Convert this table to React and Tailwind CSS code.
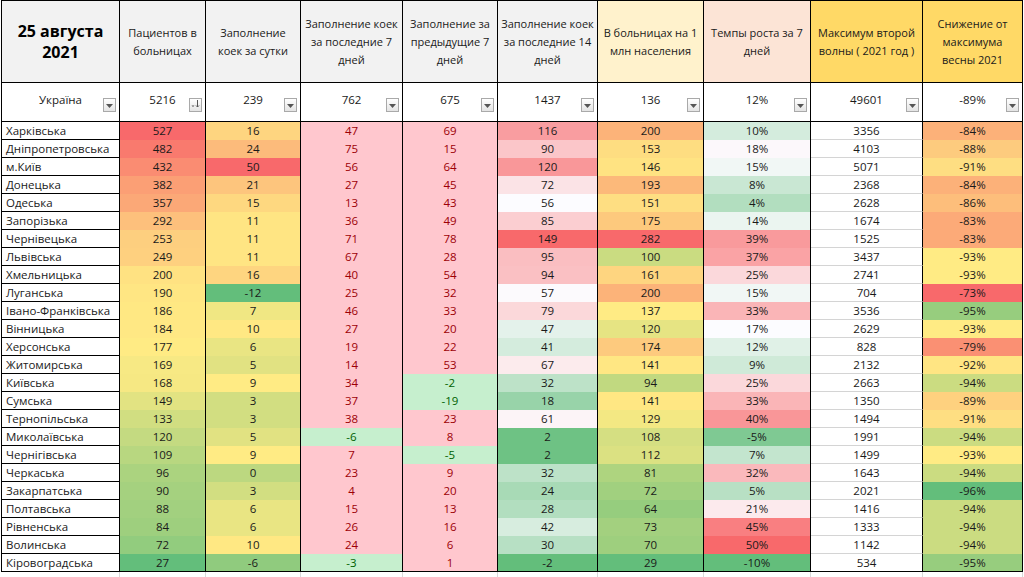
import React from 'react';

const rows = [
  ['Харківська', 527, 16, 47, 69, 116, 200, 10, 3356, -84],
  ['Дніпропетровська', 482, 24, 75, 15, 90, 153, 18, 4103, -88],
  ['м.Київ', 432, 50, 56, 64, 120, 146, 15, 5071, -91],
  ['Донецька', 382, 21, 27, 45, 72, 193, 8, 2368, -84],
  ['Одеська', 357, 15, 13, 43, 56, 151, 4, 2628, -86],
  ['Запорізька', 292, 11, 36, 49, 85, 175, 14, 1674, -83],
  ['Чернівецька', 253, 11, 71, 78, 149, 282, 39, 1525, -83],
  ['Львівська', 249, 11, 67, 28, 95, 100, 37, 3437, -93],
  ['Хмельницька', 200, 16, 40, 54, 94, 161, 25, 2741, -93],
  ['Луганська', 190, -12, 25, 32, 57, 200, 15, 704, -73],
  ['Івано-Франківська', 186, 7, 46, 33, 79, 137, 33, 3536, -95],
  ['Вінницька', 184, 10, 27, 20, 47, 120, 17, 2629, -93],
  ['Херсонська', 177, 6, 19, 22, 41, 174, 12, 828, -79],
  ['Житомирська', 169, 5, 14, 53, 67, 141, 9, 2132, -92],
  ['Київська', 168, 9, 34, -2, 32, 94, 25, 2663, -94],
  ['Сумська', 149, 3, 37, -19, 18, 141, 33, 1350, -89],
  ['Тернопільська', 133, 3, 38, 23, 61, 129, 40, 1494, -91],
  ['Миколаївська', 120, 5, -6, 8, 2, 108, -5, 1991, -94],
  ['Чернігівська', 109, 9, 7, -5, 2, 112, 7, 1499, -93],
  ['Черкаська', 96, 0, 23, 9, 32, 81, 32, 1643, -94],
  ['Закарпатська', 90, 3, 4, 20, 24, 72, 5, 2021, -96],
  ['Полтавська', 88, 6, 15, 13, 28, 64, 21, 1416, -94],
  ['Рівненська', 84, 6, 26, 16, 42, 73, 45, 1333, -94],
  ['Волинська', 72, 10, 24, 6, 30, 70, 50, 1142, -94],
  ['Кіровоградська', 27, -6, -3, 1, -2, 29, -10, 534, -95],
];

const GREEN = [99, 190, 123];
const YELLOW = [255, 235, 132];
const RED = [248, 105, 107];
const WHITE = [252, 252, 255];

const mix = (a, b, t) => a.map((c, i) => Math.round(c + (b[i] - c) * t));

// excel style 3-colour scale: min / 50th percentile / max
const makeScale = (col, midColor) => {
  const vals = rows.map((r) => r[col]).sort((a, b) => a - b);
  const min = vals[0];
  const max = vals[vals.length - 1];
  const mid = vals[Math.floor(vals.length / 2)];
  return (v) => {
    let c;
    if (v <= mid) c = mix(GREEN, midColor, mid === min ? 1 : (v - min) / (mid - min));
    else c = mix(midColor, RED, (v - mid) / (max - mid));
    return `rgb(${c[0]},${c[1]},${c[2]})`;
  };
};

const scales = {
  1: makeScale(1, YELLOW),
  2: makeScale(2, YELLOW),
  5: makeScale(5, WHITE),
  6: makeScale(6, YELLOW),
  7: makeScale(7, WHITE),
  9: makeScale(9, YELLOW),
};

const headers = [
  ['Пациентов в', 'больницах'],
  ['Заполнение', 'коек за сутки'],
  ['Заполнение коек', 'за последние 7', 'дней'],
  ['Заполнение за', 'предыдущие 7', 'дней'],
  ['Заполнение коек', 'за последние 14', 'дней'],
  ['В больницах на 1', 'млн населения'],
  ['Темпы роста за 7', 'дней'],
  ['Максимум второй', 'волны ( 2021 год )'],
  ['Снижение от', 'максимума', 'весны 2021'],
];

const headerBg = [
  'bg-[#f2f2f2]',
  'bg-[#f2f2f2]',
  'bg-[#f2f2f2]',
  'bg-[#f2f2f2]',
  'bg-[#f2f2f2]',
  'bg-[#fff2cc]',
  'bg-[#fce4d6]',
  'bg-[#ffd966]',
  'bg-[#ffd966]',
];

const totals = ['5216', '239', '762', '675', '1437', '136', '12%', '49601', '-89%'];

const FilterBtn = ({ sort }) => (
  <span className="absolute right-[3px] top-[15px] flex h-[14px] w-[13px] items-end justify-center border border-[#a9a9a9] bg-linear-to-b from-white to-[#e4e4e4] pb-[3px]">
    {sort ? (
      <svg width="9" height="8" viewBox="0 0 9 8">
        <path d="M0.5 5.5h3L2 7z" fill="#555" />
        <path d="M6.5 0v7M5 5.5l1.5 1.5 1.5-1.5" stroke="#555" strokeWidth="1" fill="none" />
      </svg>
    ) : (
      <svg width="7" height="4" viewBox="0 0 7 4">
        <path d="M0 0h7L3.5 4z" fill="#555" />
      </svg>
    )}
  </span>
);

const fmt = (v, col) => (col === 7 || col === 9 ? `${v}%` : `${v}`);

export default function App() {
  const last = rows.length - 1;
  return (
    <div className="min-h-[577px] bg-white pl-[1px] font-['Open_Sans',sans-serif] text-[11px] text-[#1a1a1a]">
      <div className="grid w-max grid-cols-[118px_86px_95px_102px_95px_100px_106px_107px_112px_100px] border-l border-t border-black">
        {/* header */}
        <div className="flex h-[82px] items-center justify-center border-b border-r border-black bg-[#f2f2f2] text-center text-[16px] font-bold leading-[21px] text-black">
          <div>
            25 августа
            <br />
            2021
          </div>
        </div>
        {headers.map((lines, i) => (
          <div
            key={i}
            className={`flex h-[82px] items-center justify-center border-b border-r border-black text-center leading-[18px] whitespace-nowrap ${headerBg[i]}`}
          >
            <div>
              {lines.map((l, j) => (
                <div key={j}>{l}</div>
              ))}
            </div>
          </div>
        ))}

        {/* total row */}
        <div className="relative flex h-[39px] items-center justify-center border-b border-r border-black pb-[4px] text-[11.5px]">
          Україна
          <FilterBtn />
        </div>
        {totals.map((t, i) => (
          <div key={i} className="relative flex h-[39px] items-center justify-center border-b border-r border-black pb-[4px] text-[11.5px]">
            {t}
            <FilterBtn sort={i === 0} />
          </div>
        ))}

        {/* data */}
        {rows.map((r, ri) => (
          <React.Fragment key={r[0]}>
            <div className="h-[18px] border-b border-r border-black pl-[4px] text-[11.5px] leading-[17px] whitespace-nowrap">{r[0]}</div>
            {r.slice(1).map((v, k) => {
              const col = k + 1;
              const bottom = ri === last ? 'border-b border-b-black' : '';
              if (col === 3 || col === 4) {
                const cls = v < 0 ? 'bg-[#c6efce] text-[#006100]' : 'bg-[#ffc7ce] text-[#9c0006]';
                return (
                  <div key={col} className={`h-[18px] border-r border-black text-center text-[11.5px] leading-[18px] ${cls} ${bottom}`}>
                    {v}
                  </div>
                );
              }
              if (col === 8) {
                return (
                  <div
                    key={col}
                    className={`h-[18px] border-b border-r border-black text-center text-[11.5px] leading-[17px] ${ri === last ? 'border-b-black' : 'border-b-[#d4d4d4]'}`}
                  >
                    {v}
                  </div>
                );
              }
              return (
                <div
                  key={col}
                  className={`h-[18px] border-r border-black text-center text-[11.5px] leading-[18px] ${bottom}`}
                  style={{ backgroundColor: scales[col](v) }}
                >
                  {fmt(v, col)}
                </div>
              );
            })}
          </React.Fragment>
        ))}
      </div>
      <div className="flex h-[5px]">
        <div className="w-[119px] border-r border-[#d9d9d9]" />
        <div className="w-[86px] border-r border-[#d9d9d9]" />
        <div className="w-[95px] border-r border-[#d9d9d9]" />
        <div className="w-[102px] border-r border-[#d9d9d9]" />
        <div className="w-[95px] border-r border-[#d9d9d9]" />
        <div className="w-[100px] border-r border-[#d9d9d9]" />
        <div className="w-[106px] border-r border-[#d9d9d9]" />
        <div className="w-[107px] border-r border-[#d9d9d9]" />
        <div className="w-[112px] border-r border-[#d9d9d9]" />
        <div className="w-[100px] border-r border-[#d9d9d9]" />
      </div>
    </div>
  );
}
